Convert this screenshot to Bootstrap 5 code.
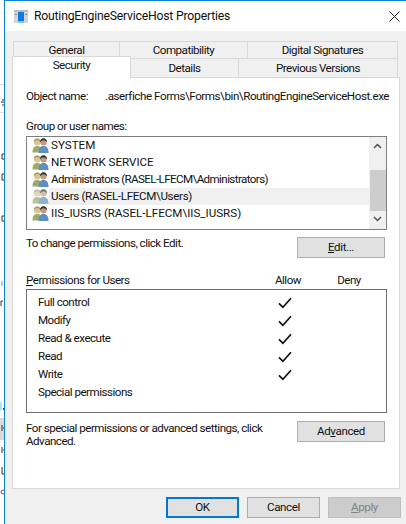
<!DOCTYPE html>
<html lang="en">
<head>
<meta charset="utf-8">
<title>RoutingEngineServiceHost Properties</title>
<link href="https://cdn.jsdelivr.net/npm/bootstrap@5.3.0/dist/css/bootstrap.min.css" rel="stylesheet">
<style>
html,body{margin:0;height:524px;overflow:hidden;background:#fff}
body{font-family:Roboto,"Liberation Sans",Arial,sans-serif;font-size:11.6px;line-height:13px;letter-spacing:-.5px;color:#111}
.shell{height:524px}
.sliver{width:4px;flex:none}
.sliver svg{display:block}
.dlg{flex:1;min-width:0;border-left:1px solid #0c82e0;border-top:1px solid #0c82e0;background:#f0f0f0;height:524px}
.titlebar{height:30px;background:#fff;padding-left:9px;font-size:12.2px;letter-spacing:-.2px}
.titlebar .ttl{margin-left:6px}
.titlebar .closer{margin-left:auto;margin-right:6px}
.tabs{padding:10px 0 0 7px}
.tabline{height:17px;padding-left:1px;flex-wrap:nowrap}
.tabline.lower{height:19px;padding-left:0}
.tabx{display:flex;align-items:center;justify-content:center;background:#f0f0f0;border:1px solid #d9d9d9;border-bottom:0;margin-right:-1px;color:#111;flex:none;height:100%;text-decoration:none}
.tabx.on{background:#fff;height:23px;margin-top:-2px;margin-right:-1px;position:relative;z-index:2;padding-bottom:5px}
.w-gen{width:107px}.w-com{width:129px}.w-sig{width:151px}
.w-sec{width:119px}.w-det{width:109px}.w-prev{width:160px}
.sheet{margin-left:7px;width:388px;height:412px;background:#fff;border:1px solid #d9d9d9;padding:12px 13px 0 13px;position:relative;z-index:1}
.objline{height:13px;white-space:nowrap}
.objname{width:79px;flex:none}
.objpath{white-space:nowrap;letter-spacing:-.43px}
.lblgroup{margin-top:17px;height:13px}
.ulist{margin-top:3px;width:361px;height:94px;border:1px solid #7f7f7f;background:#fff;border-radius:0;overflow:hidden}
.ulist .rows{flex:1;min-width:0}
.urow{height:17px;border:0;padding:0 0 0 5px;background:transparent;color:#111;border-radius:0!important;display:flex;align-items:center;white-space:nowrap}
.urow .lab{height:17px;display:flex;align-items:center;flex:1;padding-left:2px}
.urow .caps{letter-spacing:0}
.urow .tight{letter-spacing:-.6px}
.urow .mid{letter-spacing:-.33px}
.urow.sel .lab{background:#f0f0f0}
.urow.sel svg{opacity:.7}
.sbar{width:17px;background:#f0f0f0;flex:none;padding:0}
.sbar .gutter{height:15px}
.sbar .thumb{height:41px;background:#cdcdcd;margin-left:1px}
.winbtn{width:88px;height:21px;background:#e1e1e1;border:1px solid #adadad;border-radius:0;color:#111;font-size:11.6px;line-height:13px;letter-spacing:-.4px;padding:0;display:flex;align-items:center;justify-content:center}
.winbtn:hover{background:#e1e1e1;border-color:#adadad;color:#111}
.winbtn u{text-underline-offset:1px}
.changerow{margin-top:7px;width:359px;height:21px}
.permhead{margin-top:16px;width:361px;height:13px}
.permhead .cA{width:36px;text-align:center;margin-left:auto}
.permhead .cD{width:36px;text-align:center;margin-left:25px;margin-right:20px}
.permbox{margin-top:2px;width:361px;height:124px;border:1px solid #6e6e6e;padding-top:3px}
.prow{height:18px;padding-left:11px;align-items:center}
.prow .nm{width:240px}
.prow svg{display:block;margin-top:1px}
.advrow{margin-top:8px;width:359px}
.advrow .txt{width:245px;padding-top:1px}
.footbar{padding:8px 0 0 161px;gap:8px}
.footbar .winbtn{width:73px;height:21px}
.footbar .ok{border:2px solid #0078d7}
.footbar .na{background:#ccc;border-color:#bfbfbf;color:#838383;opacity:1}
</style>
</head>
<body>
<svg width="0" height="0" class="d-block" style="height:0">
<defs>
<symbol id="ppl" viewBox="0 0 17 17">
<ellipse cx="5.2" cy="5" rx="3.300" ry="3.500" fill="#dcc49a"/>
<path d="M1.800 5.500c-.5-5.500 7.300-5.500 6.800 0-1-1.800-2-2.300-3.400-2.300S2.800 3.700 1.800 5.500z" fill="#a39c5c"/>
<path d="M.5 15.500c0-4.500 1.500-6.500 4.700-6.500s4.300 2 4.300 6.500z" fill="#9cac68"/>
<ellipse cx="11.500" cy="5" rx="3.200" ry="3.600" fill="#c99a78"/>
<path d="M8.100 5.500c-.7-5.600 7.300-5.800 6.800-.2-1-1.300-2-2-3.400-2-1.300 0-2.400.9-3.400 2.200z" fill="#2b3138"/>
<path d="M6.500 16c0-4.500 1.500-7 5-7s5 2.500 5 7z" fill="#5f8fbe"/>
</symbol>
<symbol id="tick" viewBox="0 0 14 12">
<path d="M1 6.300 4.900 10.300 13 1.300" fill="none" stroke="#111" stroke-width="1.700"/>
</symbol>
</defs>
</svg>
<div class="shell d-flex">
  <div class="sliver">
    <svg width="4" height="524" viewBox="0 0 4 524">
      <rect y="84" width="4" height="1" fill="#dcdcdc"/><rect y="112" width="4" height="1" fill="#dcdcdc"/>
      <path d="M2 100h2M1 102h3M2 105h2" stroke="#333" stroke-width="1"/>
      <path d="M4 154H2v5h2" fill="none" stroke="#333"/>
      <path d="M4 174H2v6h2" fill="none" stroke="#333"/>
      <path d="M4 216H2v5h2" fill="none" stroke="#333"/>
      <rect x="1" y="281" width="2" height="5" fill="#9bd3ee"/>
      <path d="M1 301v5M1 301h2" stroke="#333"/>
      <rect x="0" y="402" width="2" height="8" fill="#a6e4f7"/><rect x="3" y="408" width="1" height="2" fill="#333"/>
      <rect y="418" width="4" height="22" fill="#d9d9d9"/>
      <path d="M2 425v6M3 428h1" stroke="#333"/>
      <path d="M2 447v6M3 450h1" stroke="#334"/>
      <path d="M2 467v7h2" fill="none" stroke="#333"/>
      <circle cx="3" cy="492" r="2" fill="none" stroke="#844"/>
    </svg>
  </div>
  <div class="dlg d-flex flex-column">
    <div class="titlebar d-flex align-items-center">
      <svg width="14" height="13" viewBox="0 0 14 13"><rect width="14" height="13" fill="#d4d4d4"/><rect x="0" y="0" width="14" height="2" fill="#bdbdbd"/><rect x="4" y="2" width="6" height="9" fill="#0a7be0"/><rect x="4" y="11" width="6" height="2" fill="#8cc4f0"/><rect x="1" y="4" width="2" height="1" fill="#888"/><rect x="11" y="4" width="2" height="1" fill="#888"/></svg>
      <span class="ttl">RoutingEngineServiceHost Properties</span>
      <svg class="closer" width="11" height="11" viewBox="0 0 11 11"><path d="M.5.500l10 10M10.500.500l-10 10" stroke="#222" stroke-width="1" fill="none"/></svg>
    </div>
    <div class="tabs">
      <div class="nav tabline">
        <a class="tabx w-gen">General</a><a class="tabx w-com">Compatibility</a><a class="tabx w-sig">Digital Signatures</a>
      </div>
      <div class="nav tabline lower">
        <a class="tabx on w-sec">Security</a><a class="tabx w-det">Details</a><a class="tabx w-prev">Previous Versions</a>
      </div>
    </div>
    <div class="sheet">
      <div class="objline d-flex"><span class="objname">Object name:</span><span class="objpath">.aserfiche Forms\Forms\bin\RoutingEngineServiceHost.exe</span></div>
      <div class="lblgroup">Group or user names:</div>
      <div class="ulist d-flex">
        <div class="rows list-group">
          <div class="list-group-item urow"><svg width="17" height="17"><use href="#ppl"/></svg><span class="lab caps">SYSTEM</span></div>
          <div class="list-group-item urow"><svg width="17" height="17"><use href="#ppl"/></svg><span class="lab caps">NETWORK SERVICE</span></div>
          <div class="list-group-item urow"><svg width="17" height="17"><use href="#ppl"/></svg><span class="lab tight">Administrators (RASEL-LFECM\Administrators)</span></div>
          <div class="list-group-item urow sel"><svg width="17" height="17"><use href="#ppl"/></svg><span class="lab mid">Users (RASEL-LFECM\Users)</span></div>
          <div class="list-group-item urow"><svg width="17" height="17"><use href="#ppl"/></svg><span class="lab caps">IIS_IUSRS (RASEL-LFECM\IIS_IUSRS)</span></div>
        </div>
        <div class="sbar">
          <svg class="d-block" width="17" height="18" viewBox="0 0 17 18"><path d="M5 11l3.500-3.500L12 11" fill="none" stroke="#505050" stroke-width="1.500"/></svg>
          <div class="gutter"></div>
          <div class="thumb"></div>
          <svg class="d-block" width="17" height="18" viewBox="0 0 17 18"><path d="M5 6l3.500 3.500L12 6" fill="none" stroke="#505050" stroke-width="1.500"/></svg>
        </div>
      </div>
      <div class="changerow d-flex justify-content-between">
        <span class="txt">To change permissions, click Edit.</span>
        <button type="button" class="btn winbtn"><span><u>E</u>dit...</span></button>
      </div>
      <div class="permhead d-flex">
        <span><u>P</u>ermissions for Users</span>
        <span class="cA">Allow</span><span class="cD">Deny</span>
      </div>
      <div class="permbox">
        <div class="prow d-flex"><span class="nm">Full control</span><svg width="14" height="12"><use href="#tick"/></svg></div>
        <div class="prow d-flex"><span class="nm">Modify</span><svg width="14" height="12"><use href="#tick"/></svg></div>
        <div class="prow d-flex"><span class="nm">Read &amp; execute</span><svg width="14" height="12"><use href="#tick"/></svg></div>
        <div class="prow d-flex"><span class="nm">Read</span><svg width="14" height="12"><use href="#tick"/></svg></div>
        <div class="prow d-flex"><span class="nm">Write</span><svg width="14" height="12"><use href="#tick"/></svg></div>
        <div class="prow d-flex"><span class="nm">Special permissions</span></div>
      </div>
      <div class="advrow d-flex justify-content-between">
        <span class="txt">For special permissions or advanced settings, click Advanced.</span>
        <button type="button" class="btn winbtn"><span>Ad<u>v</u>anced</span></button>
      </div>
    </div>
    <div class="footbar d-flex">
      <button type="button" class="btn winbtn ok">OK</button>
      <button type="button" class="btn winbtn">Cancel</button>
      <button type="button" class="btn winbtn na"><span><u>A</u>pply</span></button>
    </div>
  </div>
</div>
<script src="https://cdn.jsdelivr.net/npm/bootstrap@5.3.0/dist/js/bootstrap.bundle.min.js"></script>
</body>
</html>
